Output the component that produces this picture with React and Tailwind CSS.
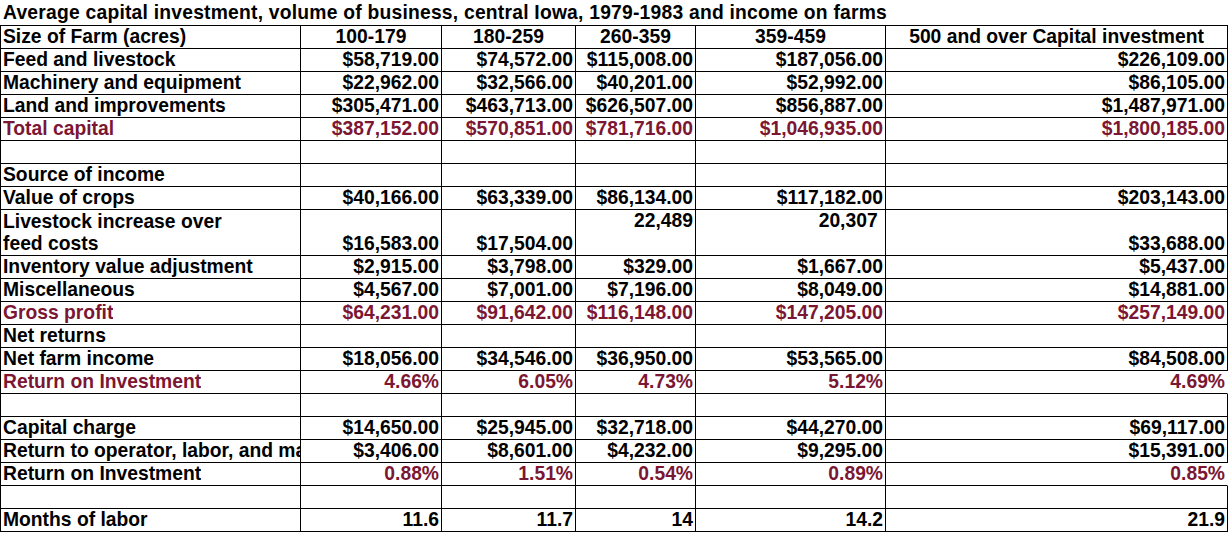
import React from "react";

const RED = "text-[#7b1633]";

const rows = [
  { label: "Size of Farm (acres)", vals: ["100-179", "180-259", "260-359", "359-459", "500 and over Capital investment"], header: true },
  { label: "Feed and livestock", vals: ["$58,719.00", "$74,572.00", "$115,008.00", "$187,056.00", "$226,109.00"] },
  { label: "Machinery and equipment", vals: ["$22,962.00", "$32,566.00", "$40,201.00", "$52,992.00", "$86,105.00"] },
  { label: "Land and improvements", vals: ["$305,471.00", "$463,713.00", "$626,507.00", "$856,887.00", "$1,487,971.00"] },
  { label: "Total capital", vals: ["$387,152.00", "$570,851.00", "$781,716.00", "$1,046,935.00", "$1,800,185.00"], red: true, redLabel: true },
  { label: "", vals: ["", "", "", "", ""] },
  { label: "Source of income", vals: ["", "", "", "", ""] },
  { label: "Value of crops", vals: ["$40,166.00", "$63,339.00", "$86,134.00", "$117,182.00", "$203,143.00"] },
  { label: "Livestock increase over\nfeed costs", vals: ["$16,583.00", "$17,504.00", "22,489", "20,307", "$33,688.00"], double: true },
  { label: "Inventory value adjustment", vals: ["$2,915.00", "$3,798.00", "$329.00", "$1,667.00", "$5,437.00"] },
  { label: "Miscellaneous", vals: ["$4,567.00", "$7,001.00", "$7,196.00", "$8,049.00", "$14,881.00"] },
  { label: "Gross profit", vals: ["$64,231.00", "$91,642.00", "$116,148.00", "$147,205.00", "$257,149.00"], red: true, redLabel: true },
  { label: "Net returns", vals: ["", "", "", "", ""] },
  { label: "Net farm income", vals: ["$18,056.00", "$34,546.00", "$36,950.00", "$53,565.00", "$84,508.00"] },
  { label: "Return on Investment", vals: ["4.66%", "6.05%", "4.73%", "5.12%", "4.69%"], red: true, redLabel: true, noRight: true },
  { label: "", vals: ["", "", "", "", ""] },
  { label: "Capital charge", vals: ["$14,650.00", "$25,945.00", "$32,718.00", "$44,270.00", "$69,117.00"] },
  { label: "Return to operator, labor, and management", vals: ["$3,406.00", "$8,601.00", "$4,232.00", "$9,295.00", "$15,391.00"] },
  { label: "Return on Investment", vals: ["0.88%", "1.51%", "0.54%", "0.89%", "0.85%"], red: true, noRight: true },
  { label: "", vals: ["", "", "", "", ""] },
  { label: "Months of labor", vals: ["11.6", "11.7", "14", "14.2", "21.9"] },
];

export default function App() {
  return (
    <div className="w-[1232px] h-[547px] bg-white text-black font-['Liberation_Sans',Arial,sans-serif] font-bold text-[19.3px] overflow-hidden">
      <div className="h-[25px] leading-[25px] pl-[3px] whitespace-nowrap tracking-[0.22px]">
        Average capital investment, volume of business, central Iowa, 1979-1983 and income on farms
      </div>
      <div className="w-[1228px] border-l border-t border-black grid grid-cols-[300px_141px_134px_120px_190px_342px]">
        {rows.map((r, i) => {
          const h = r.double ? "h-[46px]" : "h-[23px]";
          return (
            <React.Fragment key={i}>
              <div
                className={`${h} border-b border-r border-black pl-[2px] overflow-hidden leading-[22px] whitespace-pre flex items-end ${r.redLabel ? RED : ""}`}
              >
                <span className="block max-w-full overflow-hidden">{r.label}</span>
              </div>
              {r.vals.map((v, j) => {
                const isTop = r.double && (j === 2 || j === 3);
                const last = j === 4;
                return (
                  <div
                    key={j}
                    className={`${h} border-b ${last && r.noRight ? "border-r border-r-transparent" : "border-r"} border-black leading-[22px] whitespace-nowrap overflow-hidden flex ${isTop ? "items-start" : "items-end"} ${r.header ? "justify-center" : "justify-end pr-[2px]"} ${r.red ? RED : ""}`}
                  >
                    <span>{v}{isTop && j === 3 ? "\u00a0" : ""}</span>
                  </div>
                );
              })}
            </React.Fragment>
          );
        })}
      </div>
    </div>
  );
}
